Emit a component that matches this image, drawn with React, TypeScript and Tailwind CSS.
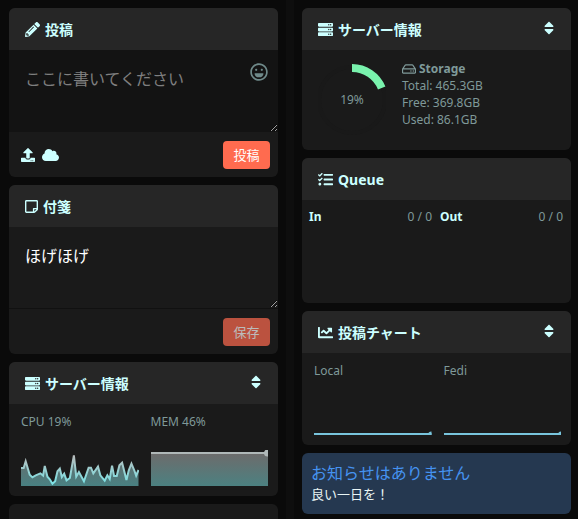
import React from "react";
import {
  FaChartLine,
  FaCloud,
  FaPencilAlt,
  FaRegHdd,
  FaRegLaugh,
  FaRegStickyNote,
  FaServer,
  FaSort,
  FaTasks,
  FaUpload,
} from "react-icons/fa";

const CPU_LINE =
  "0,54 8,54 14,34 26,74 34,82 44,76 58,70 66,77 71,48 79,80 86,88 94,101 102,94 109,64 116,56 122,81 129,71 136,91 146,84 158,16 165,80 173,66 188,94 202,53 209,53 216,70 230,50 237,76 250,92 258,76 265,87 272,47 278,78 286,78 294,46 302,38 315,90 322,61 330,41 338,60 344,77 351,60";

type CardProps = {
  icon?: React.ReactNode;
  title?: string;
  sortable?: boolean;
  children?: React.ReactNode;
};

function Card({ icon, title, sortable, children }: CardProps) {
  return (
    <section className="overflow-hidden rounded-md bg-[#1a1a1a]">
      <header className="flex h-[42px] items-center gap-[5px] bg-[#262626] px-4 text-sm font-bold text-[#ccffff]">
        {icon}
        <h2 className="flex-1 pt-px">{title}</h2>
        {sortable && (
          <button type="button" aria-label="表示切り替え" className="flex w-3 justify-center pb-[2px]">
            <FaSort className="h-4 w-4 shrink-0" />
          </button>
        )}
      </header>
      {children}
    </section>
  );
}

function CpuChart() {
  return (
    <svg viewBox="0 0 351 108" preserveAspectRatio="none" className="h-9 w-full" role="img" aria-label="CPU">
      <defs>
        <linearGradient id="cpuLine" gradientUnits="userSpaceOnUse" x1="0" y1="108" x2="0" y2="14">
          <stop offset="0" stopColor="#77e6e9" />
          <stop offset="1" stopColor="#b9b9b9" />
        </linearGradient>
      </defs>
      <polygon points={`0,108 ${CPU_LINE} 351,108`} fill="url(#cpuLine)" fillOpacity="0.5" />
      <polyline points={CPU_LINE} fill="none" stroke="url(#cpuLine)" strokeWidth="6" />
    </svg>
  );
}

function MemChart() {
  return (
    <svg viewBox="0 0 118 36" preserveAspectRatio="none" className="h-9 w-full" role="img" aria-label="MEM">
      <defs>
        <linearGradient id="memFill" x1="0" y1="1" x2="0" y2="0">
          <stop offset="0" stopColor="#4c8181" />
          <stop offset="1" stopColor="#6d6b6b" />
        </linearGradient>
      </defs>
      <rect x="0" y="3" width="118" height="33" fill="url(#memFill)" />
      <path d="M0 3H118" stroke="#b0b8b8" strokeWidth="2" />
      <circle cx="117" cy="3" r="3.5" fill="#b0b8b8" />
    </svg>
  );
}

function FlatChart({ label }: { label: string }) {
  return (
    <figure>
      <figcaption>{label}</figcaption>
      <svg viewBox="0 0 117 36" preserveAspectRatio="none" className="mt-5 h-9 w-full" role="img" aria-label={label}>
        <path d="M0 35H117" stroke="#78c4dc" strokeWidth="2" />
        <path d="M113.500 36A3.500 3.500 0 0 1 117 32.500V36Z" fill="#78c4dc" />
      </svg>
    </figure>
  );
}

const headIcon = "h-[15px] w-[15px] shrink-0";
const textArea =
  "block h-[82px] w-full resize-y px-4 pt-[17px] text-base leading-6 outline-none scheme-dark placeholder:text-[#7f7f7f]";
const primary = "h-7 w-[47px] rounded bg-[#ff6b4f] text-[13px] leading-5 text-white";

export default function App() {
  return (
    <main className="grid h-screen grid-cols-[1fr_8px_1fr] gap-2 overflow-hidden bg-[#0a0a0a] pr-[7px] pl-[9px] font-['Noto_Sans','Noto_Sans_CJK_JP',sans-serif] text-[12px] leading-[17px] text-[#7f9999]">
      <div className="flex flex-col gap-2 pt-2">
        <Card icon={<FaPencilAlt className={headIcon} />} title="投稿">
          <div className="relative">
            <textarea aria-label="投稿" placeholder="ここに書いてください" className={`${textArea} bg-[#131313]`} />
            <button type="button" aria-label="絵文字" className="absolute top-[13px] right-[10px] text-[#6f8a8a]">
              <FaRegLaugh className="h-[18px] w-[18px]" />
            </button>
          </div>
          <footer className="flex h-[45px] items-center gap-[7px] px-2 text-[#ccffff]">
            <button type="button" aria-label="アップロード" className="ml-1">
              <FaUpload className="h-[14px] w-[14px]" />
            </button>
            <button type="button" aria-label="ドライブ" className="flex-1">
              <FaCloud className="h-[14px] w-[17px]" />
            </button>
            <button type="button" className={primary}>
              投稿
            </button>
          </footer>
        </Card>

        <Card icon={<FaRegStickyNote className="h-[15px] w-[13px] shrink-0" />} title="付箋">
          <textarea
            aria-label="付箋"
            defaultValue="ほげほげ"
            className={`${textArea} border-b border-[#111111] text-white`}
          />
          <footer className="flex h-[45px] items-center justify-end px-2">
            <button type="button" disabled className={`${primary} opacity-70`}>
              保存
            </button>
          </footer>
        </Card>

        <Card icon={<FaServer className={headIcon} />} title="サーバー情報" sortable>
          <div className="grid grid-cols-2 gap-3 pt-[9px] pr-[10px] pb-[10px] pl-3">
            <figure>
              <figcaption>CPU 19%</figcaption>
              <div className="mt-5">
                <CpuChart />
              </div>
            </figure>
            <figure>
              <figcaption>MEM 46%</figcaption>
              <div className="mt-5">
                <MemChart />
              </div>
            </figure>
          </div>
        </Card>

        <section className="h-36 shrink-0 rounded-md bg-[#1a1a1a]" />
      </div>

      <div className="bg-[#0e0e0e]" />

      <div className="flex flex-col gap-2 pt-2">
        <Card icon={<FaServer className={headIcon} />} title="サーバー情報" sortable>
          <div className="flex h-[100px] gap-4 px-4 pt-[10px]">
            <svg viewBox="0 0 68 80" className="h-20 w-[68px] shrink-0" role="img" aria-label="19%">
              <circle cx="34" cy="40" r="33" fill="none" stroke="#191919" strokeWidth="4" />
              <path d="M34 8A32 32 0 0 1 63.700 28" fill="none" stroke="#79f2ad" strokeWidth="8" />
              <text x="34" y="44" textAnchor="middle" fill="#7f9999" fontSize="12">
                19%
              </text>
            </svg>
            <div>
              <p className="flex items-center gap-[3px] font-bold">
                <FaRegHdd className="h-[14px] w-[14px]" />
                Storage
              </p>
              <p>Total: 465.3GB</p>
              <p>Free: 369.8GB</p>
              <p>Used: 86.1GB</p>
            </div>
          </div>
        </Card>

        <Card icon={<FaTasks className={headIcon} />} title="Queue">
          <dl className="grid h-[103px] grid-cols-2 gap-2 pt-2 pr-2 pl-[7px]">
            <div className="flex justify-between">
              <dt className="font-bold text-[#ccffff]">In</dt>
              <dd>0 / 0</dd>
            </div>
            <div className="flex justify-between">
              <dt className="font-bold text-[#ccffff]">Out</dt>
              <dd>0 / 0</dd>
            </div>
          </dl>
        </Card>

        <Card icon={<FaChartLine className={headIcon} />} title="投稿チャート" sortable>
          <div className="grid grid-cols-2 gap-3 pt-[9px] pr-[10px] pb-[10px] pl-3">
            <FlatChart label="Local" />
            <FlatChart label="Fedi" />
          </div>
        </Card>

        <section className="rounded-md bg-[#253850] px-[9px] pt-2 pb-[11px]">
          <h2 className="text-base leading-6 text-[#4593f0]">お知らせはありません</h2>
          <p className="text-[13px] leading-[18px] text-[#e8f4f4]">良い一日を！</p>
        </section>
      </div>
    </main>
  );
}
